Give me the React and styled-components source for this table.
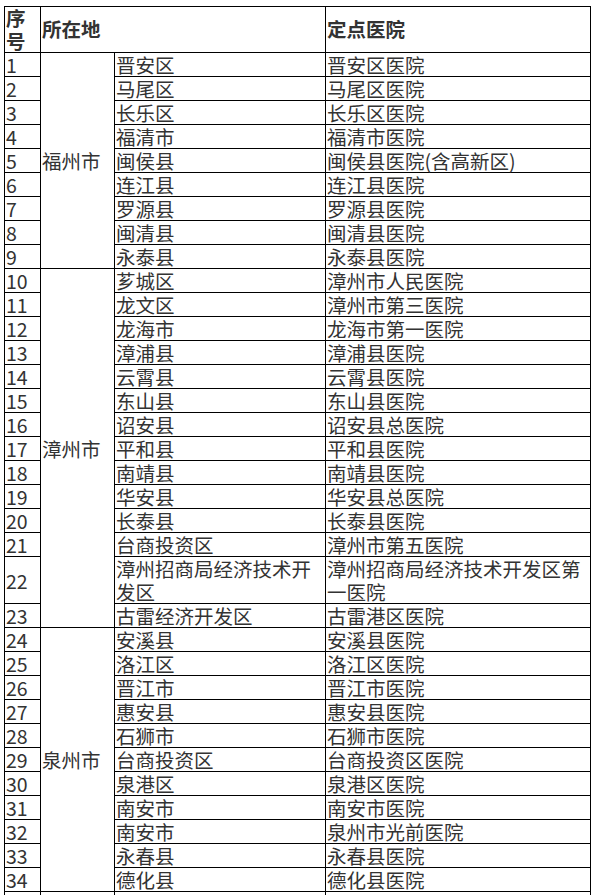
import React from "react";
import styled, { createGlobalStyle } from "styled-components";

const GlobalStyle = createGlobalStyle`
  html, body {
    margin: 0;
    padding: 0;
    background: #fff;
    overflow: hidden;
    height: 895px;
  }
  body {
    font-family: "Noto Sans CJK SC", "Noto Sans", sans-serif;
    color: #333;
  }
`;

const Page = styled.div`
  padding: 6px 0 0 4px;
`;

const Table = styled.table`
  border-collapse: collapse;
  table-layout: fixed;
  width: 587px;
  font-size: 19.5px;
  line-height: 23px;
`;

const HeadCell = styled.th`
  border: 1px solid #000;
  padding: 0 0 0 1px;
  text-align: left;
  vertical-align: middle;
  font-weight: bold;
  line-height: 22.5px;
  word-break: break-all;
`;

const Cell = styled.td`
  border: 1px solid #000;
  padding: 0 0 0 ${(p) => p.$pad || 1}px;
  vertical-align: ${(p) => (p.$middle ? "middle" : "top")};
  white-space: normal;
  word-break: break-all;
`;

const groups = [
  {
    city: "福州市",
    rows: [
      ["晋安区", "晋安区医院"],
      ["马尾区", "马尾区医院"],
      ["长乐区", "长乐区医院"],
      ["福清市", "福清市医院"],
      ["闽侯县", "闽侯县医院(含高新区)"],
      ["连江县", "连江县医院"],
      ["罗源县", "罗源县医院"],
      ["闽清县", "闽清县医院"],
      ["永泰县", "永泰县医院"],
    ],
  },
  {
    city: "漳州市",
    rows: [
      ["芗城区", "漳州市人民医院"],
      ["龙文区", "漳州市第三医院"],
      ["龙海市", "龙海市第一医院"],
      ["漳浦县", "漳浦县医院"],
      ["云霄县", "云霄县医院"],
      ["东山县", "东山县医院"],
      ["诏安县", "诏安县总医院"],
      ["平和县", "平和县医院"],
      ["南靖县", "南靖县医院"],
      ["华安县", "华安县总医院"],
      ["长泰县", "长泰县医院"],
      ["台商投资区", "漳州市第五医院"],
      ["漳州招商局经济技术开发区", "漳州招商局经济技术开发区第一医院"],
      ["古雷经济开发区", "古雷港区医院"],
    ],
  },
  {
    city: "泉州市",
    rows: [
      ["安溪县", "安溪县医院"],
      ["洛江区", "洛江区医院"],
      ["晋江市", "晋江市医院"],
      ["惠安县", "惠安县医院"],
      ["石狮市", "石狮市医院"],
      ["台商投资区", "台商投资区医院"],
      ["泉港区", "泉港区医院"],
      ["南安市", "南安市医院"],
      ["南安市", "泉州市光前医院"],
      ["永春县", "永春县医院"],
      ["德化县", "德化县医院"],
    ],
  },
];

export default function App() {
  let n = 0;
  return (
    <Page>
      <GlobalStyle />
      <Table>
        <colgroup>
          <col style={{ width: 36 }} />
          <col style={{ width: 74 }} />
          <col style={{ width: 211 }} />
          <col style={{ width: 265 }} />
        </colgroup>
        <thead>
          <tr>
            <HeadCell>序号</HeadCell>
            <HeadCell colSpan={2}>所在地</HeadCell>
            <HeadCell>定点医院</HeadCell>
          </tr>
        </thead>
        <tbody>
          {groups.map((g) =>
            g.rows.map((r, i) => {
              n += 1;
              return (
                <tr key={n}>
                  <Cell $middle>{n}</Cell>
                  {i === 0 && (
                    <Cell $middle rowSpan={g.rows.length}>
                      {g.city}
                    </Cell>
                  )}
                  <Cell>{r[0]}</Cell>
                  <Cell>{r[1]}</Cell>
                </tr>
              );
            })
          )}
          <tr>
            <Cell>&nbsp;</Cell>
            <Cell>&nbsp;</Cell>
            <Cell>&nbsp;</Cell>
            <Cell>&nbsp;</Cell>
          </tr>
        </tbody>
      </Table>
    </Page>
  );
}
